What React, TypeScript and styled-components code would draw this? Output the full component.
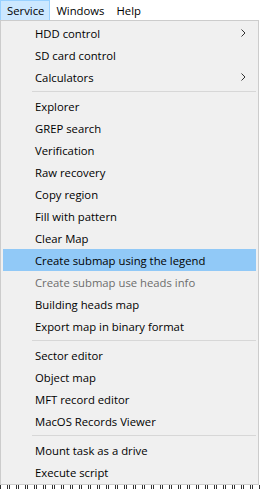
import styled, { createGlobalStyle } from 'styled-components';

const GlobalStyle = createGlobalStyle`
  html, body {
    margin: 0;
    padding: 0;
    background: #ffffff;
  }
  body {
    font-family: 'Segoe UI', 'Open Sans', sans-serif;
    font-size: 11.3px;
    color: #000000;
  }
`;

type Entry =
  | { kind: 'item'; label: string; submenu?: boolean; active?: boolean; disabled?: boolean }
  | { kind: 'sep' };

const entries: Entry[] = [
  { kind: 'item', label: 'HDD control', submenu: true },
  { kind: 'item', label: 'SD card control' },
  { kind: 'item', label: 'Calculators', submenu: true },
  { kind: 'sep' },
  { kind: 'item', label: 'Explorer' },
  { kind: 'item', label: 'GREP search' },
  { kind: 'item', label: 'Verification' },
  { kind: 'item', label: 'Raw recovery' },
  { kind: 'item', label: 'Copy region' },
  { kind: 'item', label: 'Fill with pattern' },
  { kind: 'item', label: 'Clear Map' },
  { kind: 'item', label: 'Create submap using the legend', active: true },
  { kind: 'item', label: 'Create submap use heads info', disabled: true },
  { kind: 'item', label: 'Building heads map' },
  { kind: 'item', label: 'Export map in binary format' },
  { kind: 'sep' },
  { kind: 'item', label: 'Sector editor' },
  { kind: 'item', label: 'Object map' },
  { kind: 'item', label: 'MFT record editor' },
  { kind: 'item', label: 'MacOS Records Viewer' },
  { kind: 'sep' },
  { kind: 'item', label: 'Mount task as a drive' },
  { kind: 'item', label: 'Execute script' },
];

const Chevron = () => (
  <svg width="5" height="8" viewBox="0 0 5 8">
    <path d="M0.5 0.5 L4 4 L0.5 7.5" fill="none" stroke="#333" strokeWidth="1" />
  </svg>
);

const App = () => {
  return (
    <>
      <GlobalStyle />
      <Page>
        <MenuBar>
          <BarItem $open>Service</BarItem>
          <BarItem>Windows</BarItem>
          <BarItem>Help</BarItem>
        </MenuBar>
        <Popup>
          {entries.map((e, i) =>
            e.kind === 'sep' ? (
              <Separator key={i} />
            ) : (
              <Item key={i} $active={e.active} $disabled={e.disabled}>
                <Label>{e.label}</Label>
                {e.submenu && (
                  <Arrow>
                    <Chevron />
                  </Arrow>
                )}
              </Item>
            )
          )}
        </Popup>
        <GridStrip />
      </Page>
    </>
  );
};

const Page = styled.div`
  width: 261px;
  height: 489px;
  overflow: hidden;
  display: flex;
  flex-direction: column;
`;

const MenuBar = styled.div`
  display: flex;
  height: 20px;
  background: #ffffff;
`;

const BarItem = styled.div<{ $open?: boolean }>`
  box-sizing: border-box;
  height: 20px;
  padding: ${({ $open }) => ($open ? '0 5px 0 6px' : '0 5px')};
  display: flex;
  align-items: center;
  background: ${({ $open }) => ($open ? '#cce8ff' : 'transparent')};
  border: 1px solid ${({ $open }) => ($open ? '#99d1ff' : 'transparent')};
  border-bottom: none;
`;

const Popup = styled.div`
  box-sizing: border-box;
  width: 259px;
  padding: 1px 2px 1px 2px;
  background: #f0f0f0;
  border: 1px solid #cccccc;
`;

const Item = styled.div<{ $active?: boolean; $disabled?: boolean }>`
  height: 22px;
  display: flex;
  align-items: center;
  padding-left: 32px;
  padding-right: 10px;
  background: ${({ $active }) => ($active ? '#91c9f7' : 'transparent')};
  color: ${({ $disabled }) => ($disabled ? '#6d6d6d' : '#000000')};
`;

const Label = styled.span`
  flex: 1;
  white-space: nowrap;
`;

const Arrow = styled.span`
  display: flex;
  align-items: center;
`;

const Separator = styled.div`
  height: 7px;
  margin-left: 29px;
  display: flex;
  align-items: center;
  &::after {
    content: '';
    flex: 1;
    height: 1px;
    background: #d7d7d7;
  }
`;

const GridStrip = styled.div`
  flex: 1;
  background-color: #ffffff;
  background-image: repeating-linear-gradient(
    90deg,
    #333333 0,
    #333333 1px,
    #ffffff 1px,
    #ffffff 7px,
    #333333 7px,
    #333333 8px,
    #ffffff 8px,
    #ffffff 9px
  );
`;

export default App;
